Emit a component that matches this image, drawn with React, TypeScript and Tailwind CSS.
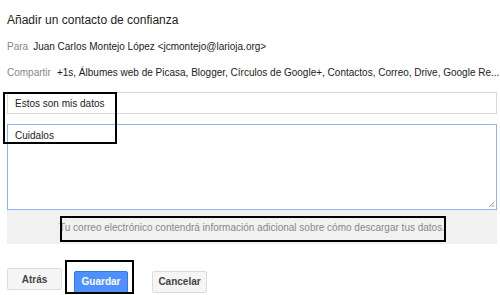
const Btn = ({ label, primary }: { label: string; primary?: boolean }) => (
  <button
    className={
      primary
        ? "h-[22px] w-[54px] rounded-[2px] border border-[#3079ed] bg-[#4d90fe] text-[10px] font-bold text-white"
        : "h-[22px] w-[55px] rounded-[2px] border border-[#dcdcdc] bg-[#f5f5f5] text-[10px] font-bold text-[#444]"
    }
  >
    {label}
  </button>
);

export default function App() {
  return (
    <div className="relative h-[295px] w-[500px] overflow-hidden bg-white font-['Liberation_Sans',Arial,sans-serif]">
      <div className="flex flex-col px-[7px] pt-[12px]">
        <h1 className="text-[12px] leading-[16px] text-[#222]">Añadir un contacto de confianza</h1>
        <div className="mt-[12px] flex gap-[5px] text-[10px] leading-[14px]">
          <span className="text-[#888]">Para</span>
          <span className="text-[#222]">Juan Carlos Montejo López &lt;jcmontejo@larioja.org&gt;</span>
        </div>
        <div className="mt-[12px] flex gap-[6px] whitespace-nowrap text-[10px] leading-[14px]">
          <span className="text-[#888]">Compartir</span>
          <span className="text-[#222]">
            +1s, Álbumes web de Picasa, Blogger, Círculos de Google+, Contactos, Correo, Drive, Google Re...
          </span>
        </div>

        <div className="mt-[12px] flex h-[22px] w-[490px] items-center border border-[#d9d9d9] px-[7px] text-[10px] text-[#222]">
          Estos son mis datos
        </div>

        <div className="relative mt-[10px] h-[86px] w-[490px] border border-[#8fb4f5] px-[7px] pt-[4px] text-[10px] leading-[14px] text-[#222]">
          Cuidalos
          <svg className="absolute bottom-[1px] right-[1px]" width="7" height="7" viewBox="0 0 7 7">
            <path d="M6 1L1 6M6 3.5L3.5 6M6 5.5L5.5 6" stroke="#999" strokeWidth="1" />
          </svg>
        </div>

        <div className="flex h-[34px] w-[490px] items-center justify-center bg-[#f1f1f1] text-[10px] text-[#888]">
          Tu correo electrónico contendrá información adicional sobre cómo descargar tus datos.
        </div>

        <div className="mt-[24px] flex">
          <Btn label="Atrás" />
          <div className="ml-[12px]">
            <Btn label="Guardar" primary />
          </div>
          <div className="ml-[24px]">
            <Btn label="Cancelar" />
          </div>
        </div>
      </div>

      <div className="absolute left-[3px] top-[92px] h-[52px] w-[114px] border-2 border-black" />
      <div className="absolute left-[60px] top-[216px] h-[26px] w-[386px] border-2 border-black" />
      <div className="absolute left-[65px] top-[260px] h-[34px] w-[69px] border-2 border-black" />
    </div>
  );
}
